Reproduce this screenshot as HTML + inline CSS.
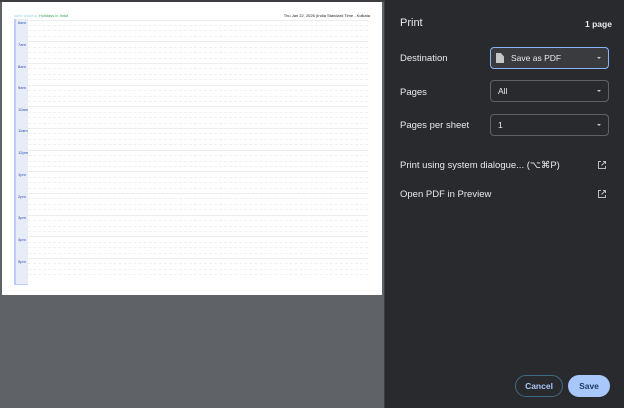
<!DOCTYPE html>
<html><head><style>
*{margin:0;padding:0;box-sizing:border-box}
body{width:624px;height:408px;overflow:hidden;background:#5f6267;font-family:"Liberation Sans",sans-serif;position:relative}
.top{position:absolute;left:0;top:0;width:384px;height:2px;background:#3c3d40}
.page{position:absolute;left:2px;top:2px;width:380px;height:293px;background:#fff}
.hdrl{position:absolute;left:12px;top:11px;font-size:4px;color:#3aa35a}
.hdrl span{color:#9fd6e6}
.hdrr{position:absolute;right:12px;top:11px;font-size:4px;color:#222}
.side{position:absolute;left:12px;top:17px;width:14px;height:266px;background:#e8ecf6;border-left:2px solid #b9cdf6;border-bottom:1px solid #b9cdf6}
.lbl{position:absolute;left:2px;font-size:4px;color:#2a4fbf}
.row{position:absolute;left:26px;width:340px;height:0}
.s{border-top:1px solid #ececec}
.d{border-top:1px dashed #f0f0f0}
.right{position:absolute;left:384px;top:0;width:240px;height:408px;background:#292a2d;color:#e8eaed;border-left:1px solid #3c3d40}
.t{position:absolute;font-size:9.5px}
.sel{position:absolute;left:105px;width:119px;height:22px;border:1px solid #5f6368;border-radius:4px;font-size:8.5px;padding-left:7px;line-height:20px}
.sel:after{content:"";position:absolute;right:7px;top:9px;border-left:2.5px solid transparent;border-right:2.5px solid transparent;border-top:2.5px solid #c8c8c8}
.ext{position:absolute;left:212px;width:10px;height:10px}
.btn{position:absolute;top:375px;height:22px;border-radius:11px;font-size:8.5px;font-weight:bold;text-align:center;line-height:20px}
</style></head><body>
<div class="top"></div>
<div class="page">
<div class="hdrl"><span>sahil sharma</span>, Holidays in India</div>
<div class="hdrr">Thu Jan 22, 2026 (India Standard Time - Kolkata</div>
<div class="side">
<div class="lbl" style="top:1px">6am</div><div class="lbl" style="top:23px">7am</div><div class="lbl" style="top:45px">8am</div><div class="lbl" style="top:66px">9am</div><div class="lbl" style="top:88px">10am</div><div class="lbl" style="top:109px">11am</div><div class="lbl" style="top:131px">12pm</div><div class="lbl" style="top:153px">1pm</div><div class="lbl" style="top:175px">2pm</div><div class="lbl" style="top:196px">3pm</div><div class="lbl" style="top:218px">4pm</div><div class="lbl" style="top:240px">5pm</div>
</div>
<div class="row s" style="top:18px"></div><div class="row d" style="top:23px"></div><div class="row d" style="top:28px"></div><div class="row d" style="top:34px"></div>
<div class="row s" style="top:39px"></div><div class="row d" style="top:45px"></div><div class="row d" style="top:50px"></div><div class="row d" style="top:56px"></div>
<div class="row s" style="top:61px"></div><div class="row d" style="top:66px"></div><div class="row d" style="top:72px"></div><div class="row d" style="top:77px"></div>
<div class="row s" style="top:83px"></div><div class="row d" style="top:88px"></div><div class="row d" style="top:94px"></div><div class="row d" style="top:99px"></div>
<div class="row s" style="top:104px"></div><div class="row d" style="top:110px"></div><div class="row d" style="top:115px"></div><div class="row d" style="top:121px"></div>
<div class="row s" style="top:126px"></div><div class="row d" style="top:131px"></div><div class="row d" style="top:137px"></div><div class="row d" style="top:142px"></div>
<div class="row s" style="top:148px"></div><div class="row d" style="top:153px"></div><div class="row d" style="top:159px"></div><div class="row d" style="top:164px"></div>
<div class="row s" style="top:169px"></div><div class="row d" style="top:175px"></div><div class="row d" style="top:180px"></div><div class="row d" style="top:186px"></div>
<div class="row s" style="top:191px"></div><div class="row d" style="top:196px"></div><div class="row d" style="top:202px"></div><div class="row d" style="top:207px"></div>
<div class="row s" style="top:213px"></div><div class="row d" style="top:218px"></div><div class="row d" style="top:224px"></div><div class="row d" style="top:229px"></div>
<div class="row s" style="top:234px"></div><div class="row d" style="top:240px"></div><div class="row d" style="top:245px"></div><div class="row d" style="top:251px"></div>
<div class="row s" style="top:256px"></div><div class="row d" style="top:261px"></div><div class="row d" style="top:267px"></div><div class="row d" style="top:272px"></div>
</div>
<div class="right">
<div class="t" style="left:15px;top:17px;font-size:11px">Print</div>
<div class="t" style="left:200px;top:19px;font-size:8.5px;font-weight:bold">1 page</div>
<div class="t" style="left:15px;top:53px">Destination</div>
<div class="sel" style="top:47px;border:1.5px solid #8ab4f8;background:#3a3b3e;padding-left:20px">Save as PDF
<div style="position:absolute;left:5px;top:5px;width:8px;height:10px;background:#c4c7c5;clip-path:polygon(0 0,60% 0,100% 35%,100% 100%,0 100%)"></div></div>
<div class="t" style="left:15px;top:87px">Pages</div>
<div class="sel" style="top:80px">All</div>
<div class="t" style="left:15px;top:120px">Pages per sheet</div>
<div class="sel" style="top:114px">1</div>
<div class="t" style="left:15px;top:160px">Print using system dialogue... (⌥⌘P)</div>
<svg class="ext" style="top:160px" viewBox="0 0 10 10" fill="none" stroke="#bbb" stroke-width="1"><path d="M4 1.5H1.5V8.5H8.5V6M6 1.5H8.5V4M8.5 1.5L4.5 5.5"/></svg>
<div class="t" style="left:15px;top:189px">Open PDF in Preview</div>
<svg class="ext" style="top:189px" viewBox="0 0 10 10" fill="none" stroke="#bbb" stroke-width="1"><path d="M4 1.5H1.5V8.5H8.5V6M6 1.5H8.5V4M8.5 1.5L4.5 5.5"/></svg>
<div class="btn" style="left:130px;width:48px;border:1.5px solid #3e6b86;color:#a8c7fa">Cancel</div>
<div class="btn" style="left:183px;width:42px;background:#a8c7fa;color:#1f3a66;line-height:22px">Save</div>
</div>
</body></html>
